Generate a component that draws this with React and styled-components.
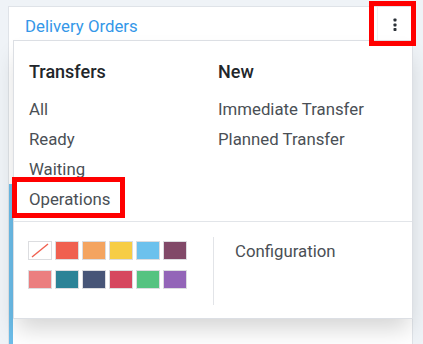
import React from "react";
import styled, { createGlobalStyle } from "styled-components";

const Global = createGlobalStyle`
  html, body { margin: 0; padding: 0; }
  body {
    background: #eff3f7;
    font-family: Roboto, "Noto Sans", sans-serif;
    overflow: hidden;
    width: 423px;
    height: 344px;
  }
  * { box-sizing: border-box; }
`;

const Page = styled.div`
  position: relative;
  width: 423px;
  height: 344px;
  overflow: hidden;
  padding: 6px 0 0 8px;
`;

const Card = styled.div`
  position: relative;
  width: 405px;
  height: 420px;
  background: #ffffff;
  border: 1px solid #dfe3e8;
  border-bottom: none;
`;

const Header = styled.div`
  display: flex;
  justify-content: space-between;
  align-items: flex-start;
  height: 33px;
`;

const Title = styled.div`
  padding: 7px 0 0 16px;
  font-size: 16.8px;
  line-height: 24px;
  color: #3497e8;
`;

const Toggle = styled.div`
  width: 35px;
  height: 33px;
  display: flex;
  align-items: center;
  justify-content: center;
  border-left: 1px solid #eef0f3;
  padding-top: 2px;
`;

const CardBody = styled.div`
  padding-top: 144px;
`;

const Record = styled.div`
  height: 240px;
  border-left: 4px solid #6cbde9;
`;

const Dropdown = styled.div`
  position: absolute;
  top: 33px;
  left: 4px;
  width: 400px;
  background: #ffffff;
  border: 1px solid #dcdfe4;
  box-shadow: 0 14px 22px -4px rgba(0, 0, 0, 0.17);
  z-index: 2;
`;

const TopSection = styled.div`
  display: grid;
  grid-template-columns: 189px auto;
  padding: 19px 0 7px 15px;
  border-bottom: 1px solid #e2e5e9;
`;

const Column = styled.div`
  display: flex;
  flex-direction: column;
`;

const ColumnTitle = styled.div`
  font-size: 18px;
  font-weight: 500;
  line-height: 24px;
  color: #22262a;
  margin-bottom: 10px;
`;

const Item = styled.div`
  font-size: 16.8px;
  line-height: 30px;
  color: #4a4f55;
  white-space: nowrap;
`;

const BottomSection = styled.div`
  display: flex;
  padding: 15px 0 13px 14px;
`;

const SwatchArea = styled.div`
  width: 185px;
  padding-top: 4px;
`;

const SwatchGrid = styled.div`
  display: grid;
  grid-template-columns: repeat(6, 24px);
  grid-auto-rows: 19px;
  column-gap: 3px;
  row-gap: 10px;
`;

const Swatch = styled.div`
  border: 1px solid #dcdde0;
  background: ${(p) => p.$color};
  position: relative;
  overflow: hidden;
`;

const Settings = styled.div`
  height: 68px;
  border-left: 1px solid #e2e4e8;
  padding: 2px 0 0 21px;
`;

const SettingsLink = styled.div`
  font-size: 16.8px;
  line-height: 24px;
  color: #4a4f55;
`;

const Highlight = styled.div`
  position: absolute;
  left: ${(p) => p.$x}px;
  top: ${(p) => p.$y}px;
  width: ${(p) => p.$w}px;
  height: ${(p) => p.$h}px;
  border: 5px solid #ff0000;
  z-index: 5;
  pointer-events: none;
`;

const colors = [
  null,
  "#f06050",
  "#f4a460",
  "#f7cd45",
  "#6cc1ed",
  "#814968",
  "#eb7e7f",
  "#2c8397",
  "#475577",
  "#d6475f",
  "#55c381",
  "#9365b8",
];

const Kebab = () => (
  <svg width="4" height="14" viewBox="0 0 4 14">
    <rect x="0.5" y="0.5" width="3" height="3" rx="0.8" fill="#2b3138" />
    <rect x="0.5" y="5.5" width="3" height="3" rx="0.8" fill="#2b3138" />
    <rect x="0.5" y="10" width="3" height="3" rx="0.8" fill="#2b3138" />
  </svg>
);

const NoColor = () => (
  <svg width="22" height="17" viewBox="0 0 22 17" style={{ display: "block" }}>
    <line x1="3" y1="15" x2="19" y2="2" stroke="#f06050" strokeWidth="1.4" />
  </svg>
);

export default function App() {
  return (
    <>
      <Global />
      <Page>
        <Card>
          <Header>
            <Title>Delivery Orders</Title>
            <Toggle>
              <Kebab />
            </Toggle>
          </Header>
          <CardBody>
            <Record />
          </CardBody>
          <Dropdown>
            <TopSection>
              <Column>
                <ColumnTitle>Transfers</ColumnTitle>
                <Item>All</Item>
                <Item>Ready</Item>
                <Item>Waiting</Item>
                <Item>Operations</Item>
              </Column>
              <Column>
                <ColumnTitle>New</ColumnTitle>
                <Item>Immediate Transfer</Item>
                <Item>Planned Transfer</Item>
              </Column>
            </TopSection>
            <BottomSection>
              <SwatchArea>
                <SwatchGrid>
                  {colors.map((c, i) => (
                    <Swatch key={i} $color={c || "#ffffff"}>
                      {c === null && <NoColor />}
                    </Swatch>
                  ))}
                </SwatchGrid>
              </SwatchArea>
              <Settings>
                <SettingsLink>Configuration</SettingsLink>
              </Settings>
            </BottomSection>
          </Dropdown>
        </Card>
        <Highlight $x={369} $y={1} $w={47} $h={45} />
        <Highlight $x={12} $y={177} $w={113} $h={41} />
      </Page>
    </>
  );
}
